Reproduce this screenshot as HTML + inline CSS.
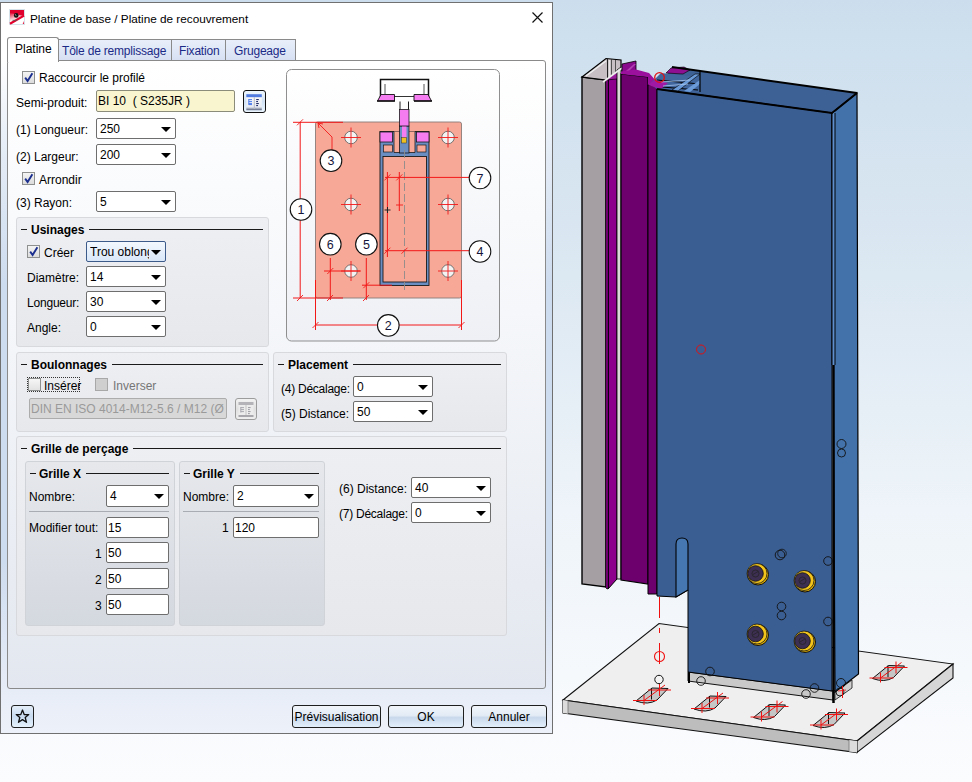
<!DOCTYPE html>
<html><head><meta charset="utf-8">
<style>
*{box-sizing:border-box;margin:0;padding:0}
html,body{width:972px;height:782px;overflow:hidden}
body{position:relative;font-family:"Liberation Sans",sans-serif;font-size:12px;letter-spacing:0px;color:#000;
background:linear-gradient(to bottom,#ccdeed 0%,#dce8f2 35%,#eef4f9 65%,#fbfcfe 100%)}
.a{position:absolute}
.t{position:absolute;white-space:pre;line-height:14px}
#dlg{position:absolute;left:0;top:2px;width:553px;height:732px;border:1px solid #707070;
background:linear-gradient(to bottom,#ffffff 0%,#fafbfd 40%,#eef2f9 100%)}
#panel{position:absolute;left:7px;top:60px;width:539px;height:629px;border:1px solid #8a8a8a;border-radius:3px;
background:linear-gradient(to bottom,#ffffff 0%,#f7f8fa 30%,#eceff4 70%,#e3e7ef 100%)}
.tab{position:absolute;top:39px;height:22px;border:1px solid #8a8a8a;border-bottom:none;background:linear-gradient(#e9effa,#d6e0f3);color:#1e3a8a}
.cb,.tb{position:absolute;background:#fff;border:1px solid #6e6e6e;border-radius:2px}
.cb::after{content:"";position:absolute;right:4px;top:8px;border-left:5px solid transparent;border-right:5px solid transparent;border-top:5px solid #000}
.cb span,.tb span{position:absolute;left:3px;top:3px;white-space:pre;line-height:14px}
.chk{position:absolute;width:13px;height:13px;border:1px solid #8e8f8f;background:linear-gradient(#f4f4f4,#dcdcdc)}
.grp{position:absolute;border:1px solid #d7d9dd;border-radius:3px;background:linear-gradient(#eeeff3,#e6e8ec)}
.gts{font-weight:bold;font-size:12px;letter-spacing:0;position:relative;top:1px;white-space:pre;line-height:14px}
.gt{position:absolute;font-weight:bold;font-size:11.5px;white-space:pre;line-height:14px}
.gl{position:absolute;height:1px;background:#1a1a1a}
.btn{position:absolute;border:1px solid #1f1f1f;border-radius:3px;background:linear-gradient(#f2f6fb 0%,#e3ebf5 45%,#c9d9ec 55%,#e2eefa 100%);text-align:center;line-height:22px}
.tb span{left:1px}
</style></head><body>

<!-- 3D view -->
<svg class="a" style="left:0;top:0" width="972" height="782" viewBox="0 0 972 782">
<polygon points="563,700 659,623.5 953,664 857,741" fill="#efefef" stroke="#111" stroke-width="1.1" />
<polygon points="563,700 857,741 857,752.5 563,713" fill="#bdbdbd" stroke="#111" stroke-width="1.1" />
<polygon points="857,741 953,664 953,678 857,752.5" fill="#d6d6d6" stroke="#111" stroke-width="1.1" />
<polygon points="849,740 857,741 857,752.5 849,751.5" fill="#dcdcdc" stroke="none" stroke-width="1" />
<line x1="849" y1="740" x2="849" y2="751.5" stroke="#777" stroke-width="0.8" />
<polygon points="563,700 568,700.7 568,713.7 563,713" fill="#dcdcdc" stroke="none" stroke-width="1" />
<line x1="568" y1="700.7" x2="568" y2="713.7" stroke="#777" stroke-width="0.8" />
<path d="M636,701 L652,688 L668,688.5 L657,700 Q648,705.5 636,701 Z" fill="#c6c6c6" stroke="#111" stroke-width="1"/>
<path d="M651.5,688 V699.5" stroke="#111" stroke-width="1"/>
<g stroke="#f01010" stroke-width="1" fill="none"><path d="M633,700.5 H657 M644,695 V705"/><path d="M648,690 H671 M659.5,684 V696"/><path d="M644,700.5 L665,685"/></g>
<path d="M694,709 L710,696 L726,696.5 L715,708 Q706,713.5 694,709 Z" fill="#c6c6c6" stroke="#111" stroke-width="1"/>
<path d="M709.5,696 V707.5" stroke="#111" stroke-width="1"/>
<g stroke="#f01010" stroke-width="1" fill="none"><path d="M691,708.5 H715 M702,703 V713"/><path d="M706,698 H729 M717.5,692 V704"/><path d="M702,708.5 L723,693"/></g>
<path d="M753.5,717.5 L769.5,704.5 L785.5,705.0 L774.5,716.5 Q765.5,722.0 753.5,717.5 Z" fill="#c6c6c6" stroke="#111" stroke-width="1"/>
<path d="M769.0,704.5 V716.0" stroke="#111" stroke-width="1"/>
<g stroke="#f01010" stroke-width="1" fill="none"><path d="M750.5,717.0 H774.5 M761.5,711.5 V721.5"/><path d="M765.5,706.5 H788.5 M777.0,700.5 V712.5"/><path d="M761.5,717.0 L782.5,701.5"/></g>
<path d="M813,725.5 L829,712.5 L845,713.0 L834,724.5 Q825,730.0 813,725.5 Z" fill="#c6c6c6" stroke="#111" stroke-width="1"/>
<path d="M828.5,712.5 V724.0" stroke="#111" stroke-width="1"/>
<g stroke="#f01010" stroke-width="1" fill="none"><path d="M810,725.0 H834 M821,719.5 V729.5"/><path d="M825,714.5 H848 M836.5,708.5 V720.5"/><path d="M821,725.0 L842,709.5"/></g>
<path d="M872.5,678.5 L888.5,665.5 L904.5,666.0 L893.5,677.5 Q884.5,683.0 872.5,678.5 Z" fill="#c6c6c6" stroke="#111" stroke-width="1"/>
<path d="M888.0,665.5 V677.0" stroke="#111" stroke-width="1"/>
<g stroke="#f01010" stroke-width="1" fill="none"><path d="M869.5,678.0 H893.5 M880.5,672.5 V682.5"/><path d="M884.5,667.5 H907.5 M896.0,661.5 V673.5"/><path d="M880.5,678.0 L901.5,662.5"/></g>
<polygon points="688,672 833,691 833,700 688,681" fill="#c9c9c9" stroke="#111" stroke-width="1" />
<polygon points="835,692 852,680 852,688 835,700" fill="#d0d0d0" stroke="#111" stroke-width="0.8" />
<line x1="689" y1="672" x2="689" y2="683" stroke="#000" stroke-width="2" />
<line x1="833.5" y1="690" x2="833.5" y2="703" stroke="#000" stroke-width="2.5" />
<polygon points="582,77 606,80 606,587 582,584" fill="#a59ea3" stroke="#000" stroke-width="1.4" />
<polygon points="582,77 606,58.5 621,60 621,76 606,80" fill="#c7bfc4" stroke="#000" stroke-width="1.2" />
<line x1="586" y1="76" x2="606" y2="61" stroke="#f2f2f2" stroke-width="1.2" />
<line x1="607.5" y1="59" x2="607.5" y2="78" stroke="#222" stroke-width="1" />
<line x1="611.5" y1="59" x2="611.5" y2="77" stroke="#333" stroke-width="0.8" />
<line x1="615.5" y1="60" x2="615.5" y2="77" stroke="#333" stroke-width="0.8" />
<line x1="609.5" y1="60" x2="609.5" y2="77" stroke="#e8e4e6" stroke-width="1.2" />
<polygon points="606,80 617,78 617,579 608,589 606,588" fill="#8c008c" stroke="#000" stroke-width="1" />
<polygon points="606,80 608.5,79.5 608.5,588 606,588" fill="#6e006e" stroke="none" stroke-width="1" />
<line x1="608.5" y1="80" x2="608.5" y2="588" stroke="#000" stroke-width="0.9" />
<polygon points="606,80 617,72 621,72 617,79" fill="#9a1a9c" stroke="#000" stroke-width="0.6" />
<polygon points="617,70 621,67 621,579 617,579" fill="#dcd8da" stroke="#000" stroke-width="0.8" />
<line x1="603" y1="82" x2="622" y2="68" stroke="#eeeeee" stroke-width="1.6" />
<polygon points="621,74 648,77 648,584 621,580" fill="#6e006e" stroke="#000" stroke-width="1.2" />
<polygon points="622,64 636,61 636,71 622,74" fill="#8a0a8e" stroke="#000" stroke-width="0.8" />
<polygon points="626,71 634,64 636,64 628,72" fill="#b040b0" stroke="none" stroke-width="1" />
<polygon points="621,71.5 636,69.5 649,73 657,82 657,86 648,85 648,77 621,74" fill="#9c109e" stroke="none" stroke-width="1" />
<polygon points="648,85 657,86 657,594 648,594" fill="#6e006e" stroke="#000" stroke-width="1" />
<polygon points="657,89 672,67 857,93 832,113" fill="#3e6195" stroke="none" stroke-width="1" />
<polygon points="657,89 832,113 832,691 688,672 688,590 676,597 657,596" fill="#3b5e92" stroke="#000" stroke-width="1" />
<polygon points="832,113 857,93 858.5,674 835,692" fill="#4372aa" stroke="#000" stroke-width="1.2" />
<polygon points="832,113 835,111 835,365 832,365" fill="#5e8ecb" stroke="none" stroke-width="1" />
<line x1="833.5" y1="365" x2="833.5" y2="691" stroke="#000" stroke-width="2.4" />
<polygon points="650,84 661,73 700,77 700,92 657,89" fill="#41669e" stroke="none" stroke-width="1" />
<line x1="657" y1="80" x2="700" y2="84" stroke="#000" stroke-width="1.2" />
<line x1="662" y1="87" x2="698" y2="90" stroke="#000" stroke-width="1.2" />
<polygon points="672,90 695,74 700,74 678,91" fill="#6a9ad8" stroke="#000" stroke-width="0.6" />
<polygon points="684,91 700,80 700,84 690,92" fill="#6a9ad8" stroke="none" stroke-width="1" />
<line x1="700" y1="71" x2="700" y2="92" stroke="#000" stroke-width="1.2" />
<polygon points="666,73 671,68 684,67 690,70 683,74" fill="#8e0f92" stroke="#000" stroke-width="0.6" />
<polygon points="648,85 655,80 668,83 661,89" fill="#a018a4" stroke="none" stroke-width="1" />
<line x1="661" y1="82" x2="690" y2="80" stroke="#aac8f0" stroke-width="0.8" />
<line x1="663" y1="86" x2="688" y2="84" stroke="#aac8f0" stroke-width="0.8" />
<polyline points="657,89 832,113 857,93" fill="none" stroke="#000" stroke-width="2"/>
<polyline points="672,67 857,93" fill="none" stroke="#000" stroke-width="2"/>
<line x1="832" y1="113" x2="832" y2="365" stroke="#000" stroke-width="1" />
<line x1="835" y1="113" x2="835" y2="365" stroke="#000" stroke-width="1" />
<path d="M676,597 L676,544 Q676,538 682,538 Q688,538 688,544 L688,590 Z" fill="#4677b0" stroke="#000" stroke-width="1.1"/>
<circle cx="701" cy="349.5" r="4.5" fill="none" stroke="#e01010" stroke-width="1" />
<circle cx="659.5" cy="77.5" r="4.8" fill="none" stroke="#e01010" stroke-width="1.3" />
<line x1="659.5" y1="597" x2="659.5" y2="669" stroke="#f01010" stroke-width="1" stroke-dasharray="21,10,5,10"/>
<circle cx="659.5" cy="656.5" r="5" fill="none" stroke="#f01010" stroke-width="1.1" />
<circle cx="659" cy="679.5" r="4.2" fill="#f4f4f4" stroke="#111" stroke-width="1" />
<circle cx="758" cy="574.5" r="10.5" fill="#e2b000" stroke="#111" stroke-width="1" />
<circle cx="757" cy="573.5" r="10" fill="#f3c51c" stroke="#1a1a1a" stroke-width="0.8" />
<circle cx="755.5" cy="573.5" r="7.8" fill="#3c2f52" stroke="#111" stroke-width="0.8" />
<circle cx="755.5" cy="573.5" r="3.5" fill="none" stroke="#222" stroke-width="0.7" />
<line x1="753" y1="574.5" x2="758" y2="571.5" stroke="#222" stroke-width="0.7" />
<circle cx="805" cy="581.5" r="10.5" fill="#e2b000" stroke="#111" stroke-width="1" />
<circle cx="804" cy="580.5" r="10" fill="#f3c51c" stroke="#1a1a1a" stroke-width="0.8" />
<circle cx="802.5" cy="580.5" r="7.8" fill="#3c2f52" stroke="#111" stroke-width="0.8" />
<circle cx="802.5" cy="580.5" r="3.5" fill="none" stroke="#222" stroke-width="0.7" />
<line x1="800" y1="581.5" x2="805" y2="578.5" stroke="#222" stroke-width="0.7" />
<circle cx="758" cy="635" r="10.5" fill="#e2b000" stroke="#111" stroke-width="1" />
<circle cx="757" cy="634" r="10" fill="#f3c51c" stroke="#1a1a1a" stroke-width="0.8" />
<circle cx="755.5" cy="634" r="7.8" fill="#3c2f52" stroke="#111" stroke-width="0.8" />
<circle cx="755.5" cy="634" r="3.5" fill="none" stroke="#222" stroke-width="0.7" />
<line x1="753" y1="635" x2="758" y2="632" stroke="#222" stroke-width="0.7" />
<circle cx="805" cy="642" r="10.5" fill="#e2b000" stroke="#111" stroke-width="1" />
<circle cx="804" cy="641" r="10" fill="#f3c51c" stroke="#1a1a1a" stroke-width="0.8" />
<circle cx="802.5" cy="641" r="7.8" fill="#3c2f52" stroke="#111" stroke-width="0.8" />
<circle cx="802.5" cy="641" r="3.5" fill="none" stroke="#222" stroke-width="0.7" />
<line x1="800" y1="642" x2="805" y2="639" stroke="#222" stroke-width="0.7" />
<circle cx="782" cy="553.5" r="4.3" fill="none" stroke="#111" stroke-width="0.8" />
<circle cx="780" cy="555" r="4.8" fill="none" stroke="#111" stroke-width="0.9" />
<circle cx="781.5" cy="606.5" r="4.3" fill="none" stroke="#111" stroke-width="0.9" />
<circle cx="781.5" cy="615.5" r="4.3" fill="none" stroke="#111" stroke-width="0.9" />
<circle cx="828" cy="561" r="4.3" fill="none" stroke="#111" stroke-width="0.9" />
<circle cx="828" cy="621.5" r="4.3" fill="none" stroke="#111" stroke-width="0.9" />
<circle cx="841.5" cy="444" r="4.5" fill="none" stroke="#111" stroke-width="0.9" />
<circle cx="841.5" cy="453" r="4" fill="none" stroke="#111" stroke-width="0.9" />
<circle cx="710" cy="671.5" r="4.3" fill="none" stroke="#111" stroke-width="0.9" />
<circle cx="701" cy="681" r="4.3" fill="none" stroke="#111" stroke-width="0.9" />
<circle cx="814.5" cy="688" r="4.3" fill="none" stroke="#111" stroke-width="0.9" />
<circle cx="806" cy="694" r="4.3" fill="none" stroke="#111" stroke-width="0.9" />
<circle cx="841" cy="683" r="4.5" fill="none" stroke="#111" stroke-width="0.9" />
<circle cx="840" cy="692" r="4" fill="none" stroke="#111" stroke-width="0.9" />
<line x1="842.5" y1="686" x2="842.5" y2="698" stroke="#f01010" stroke-width="1" />
<line x1="838" y1="691" x2="846" y2="690" stroke="#f01010" stroke-width="0.8" />
</svg>

<div class="a" style="left:0;top:2px;width:553px;height:732px;border:1px solid #707070;background:linear-gradient(to bottom,#ffffff 0px,#ffffff 55px,#e4ecf6 150px,#cedcef 280px,#cedcef 560px,#e6ecf7 680px,#edf1f9 731px)"></div>
<svg class="a" style="left:9px;top:9px" width="16" height="16" viewBox="0 0 16 16">
<defs><linearGradient id="ig" x1="0" y1="0" x2="0.3" y2="1"><stop offset="0.15" stop-color="#e2002c"/><stop offset="0.75" stop-color="#fff3f0"/></linearGradient></defs>
<rect x="0.5" y="0.5" width="15" height="15" fill="#fff" stroke="#d6e2ea"/>
<path d="M1 1H15V8.5L1 14.5Z" fill="url(#ig)"/>
<path d="M1 1H15V7L1 4Z" fill="#e0002c"/>
<path d="M1 14.8 L15 6.6" stroke="#e2002c" stroke-width="2.2"/>
<path d="M14.3 12 L15 15 H13.8Z" fill="#e2002c"/>
<path d="M3.5 11.3 H8" stroke="#555" stroke-width="0.8"/>
<circle cx="7.2" cy="6.4" r="2.3" fill="#111"/><path d="M6 5.5 L7.4 6.6" stroke="#ddd" stroke-width="0.8"/>
</svg>
<div class="t" style="left:30px;top:12px;font-size:11.75px">Platine de base / Platine de recouvrement</div>
<svg class="a" style="left:531px;top:11px" width="13" height="13" viewBox="0 0 13 13"><path d="M1.5 1.5L11.5 11.5M11.5 1.5L1.5 11.5" stroke="#111" stroke-width="1.2"/></svg>
<div class="tab" style="left:58px;width:115px;"></div>
<div class="t" style="left:62px;top:44px;color:#1b2a86;letter-spacing:-0.2px">Tôle de remplissage</div>
<div class="tab" style="left:171px;width:56px;"></div>
<div class="t" style="left:179px;top:44px;color:#1b2a86;letter-spacing:-0.2px">Fixation</div>
<div class="tab" style="left:225px;width:71px;"></div>
<div class="t" style="left:234px;top:44px;color:#1b2a86;letter-spacing:-0.2px">Grugeage</div>
<div class="a" style="left:7px;top:60px;width:539px;height:629px;border:1px solid #8a8a8a;border-radius:3px;background:linear-gradient(to bottom,#ffffff 0%,#f5f7fa 40%,#e3e7ef 100%)"></div>
<div class="a" style="left:7px;top:37px;width:52px;height:25px;border:1px solid #8a8a8a;border-bottom:none;border-radius:3px 3px 0 0;background:#fff"></div>
<div class="t" style="left:15px;top:42px;">Platine</div>
<div class="chk" style="left:22px;top:71px;"><svg width="11" height="11" style="position:absolute;left:0;top:0"><path d="M2.2 5.6 L4.6 9 L9.4 1.2" fill="none" stroke="#1b2f8f" stroke-width="1.9"/></svg></div>
<div class="t" style="left:39px;top:71px;">Raccourcir le profilé</div>
<div class="t" style="left:16px;top:96px;">Semi-produit:</div>
<div class="tb" style="left:96px;top:90px;width:139px;height:22px;background:#f9f5cf;border-color:#8c8c7a"><span>BI 10  ( S235JR )</span></div>
<div class="a" style="left:243px;top:90px;width:23px;height:23px;border:1px solid #111;border-radius:3px;background:linear-gradient(#eef7fe,#d2e2f4 50%,#eaf5fe)">
<svg width="21" height="21" style="position:absolute;left:0;top:0">
<defs><linearGradient id="bk" x1="0" y1="0" x2="0" y2="1"><stop offset="0" stop-color="#fbfcfe"/><stop offset="0.8" stop-color="#e6eaf2"/><stop offset="1" stop-color="#56607a"/></linearGradient></defs>
<rect x="2.3" y="3.2" width="15.5" height="16" fill="url(#bk)"/>
<rect x="2.3" y="3.2" width="15.5" height="3" fill="#4f7be0"/>
<path d="M10.3 6.2 V18" stroke="#b8bcc6" stroke-width="1"/>
<path d="M4.8 8 V13.8 M4.8 8.6 H8 M4.8 10.6 H8 M4.8 12.6 H8 M4.8 13.6 H8" stroke="#4a7ae8" stroke-width="1"/>
<path d="M12.2 8.6 H14.8 M12.2 10.6 H14 M12.2 12.6 H14.8 M12.2 14.6 H14" stroke="#101c5c" stroke-width="1"/>
</svg></div>
<div class="t" style="left:16px;top:123px;">(1) Longueur:</div>
<div class="cb" style="left:96px;top:118px;width:80px;height:21px;"><span>250</span></div>
<div class="t" style="left:16px;top:150px;">(2) Largeur:</div>
<div class="cb" style="left:96px;top:144px;width:80px;height:21px;"><span>200</span></div>
<div class="chk" style="left:22px;top:172px;"><svg width="11" height="11" style="position:absolute;left:0;top:0"><path d="M2.2 5.6 L4.6 9 L9.4 1.2" fill="none" stroke="#1b2f8f" stroke-width="1.9"/></svg></div>
<div class="t" style="left:39px;top:173px;">Arrondir</div>
<div class="t" style="left:16px;top:196px;">(3) Rayon:</div>
<div class="cb" style="left:96px;top:191px;width:80px;height:21px;"><span>5</span></div>
<div class="grp" style="left:16px;top:217px;width:253px;height:130px;"></div>
<div class="gl" style="left:21px;top:229px;width:6px"></div>
<div class="a" style="left:31px;top:219px;width:232px;height:20px;display:flex;align-items:center"><span class="gts">Usinages</span><span style="flex:1;height:1px;background:#1a1a1a;margin-left:5px;margin-top:1px"></span></div>
<div class="chk" style="left:27px;top:245px;"><svg width="11" height="11" style="position:absolute;left:0;top:0"><path d="M2.2 5.6 L4.6 9 L9.4 1.2" fill="none" stroke="#1b2f8f" stroke-width="1.9"/></svg></div>
<div class="t" style="left:44px;top:246px;">Créer</div>
<div class="cb" style="left:86px;top:241px;width:80px;height:21px;background:linear-gradient(#f3f8fe,#d9e7f8);border-color:#3c5a8a;overflow:hidden"><span><b style="font-weight:normal;display:block;width:59px;overflow:hidden">Trou oblong</b></span></div>
<div class="t" style="left:27px;top:271px;">Diamètre:</div>
<div class="cb" style="left:86px;top:266px;width:80px;height:21px;"><span>14</span></div>
<div class="t" style="left:27px;top:296px;letter-spacing:-0.2px">Longueur:</div>
<div class="cb" style="left:86px;top:291px;width:80px;height:21px;"><span>30</span></div>
<div class="t" style="left:27px;top:321px;">Angle:</div>
<div class="cb" style="left:86px;top:316px;width:80px;height:21px;"><span>0</span></div>
<div class="grp" style="left:16px;top:352px;width:253px;height:80px;"></div>
<div class="gl" style="left:21px;top:364px;width:6px"></div>
<div class="a" style="left:31px;top:354px;width:232px;height:20px;display:flex;align-items:center"><span class="gts">Boulonnages</span><span style="flex:1;height:1px;background:#1a1a1a;margin-left:5px;margin-top:1px"></span></div>
<div class="chk" style="left:28px;top:378px;background:linear-gradient(#f6f6f6,#e2e2e2)"></div>
<div class="a" style="left:27px;top:377px;width:53px;height:15px;border:1px dotted #333"></div>
<div class="t" style="left:44px;top:379px;">Insérer</div>
<div class="chk" style="left:95px;top:378px;background:#cfcfcf;border-color:#a8a8a8"></div>
<div class="t" style="left:113px;top:379px;color:#767676">Inverser</div>
<div class="tb" style="left:29px;top:398px;width:198px;height:21px;background:#d8d8d8;border-color:#acacac;color:#9a9a9a;overflow:hidden"><span>DIN EN ISO 4014-M12-5.6 / M12 (Ø</span></div>
<div class="a" style="left:235px;top:398px;width:22px;height:22px;border:1px solid #9c9c9c;border-radius:3px;background:linear-gradient(#f2f2f2,#e0e0e0 50%,#eeeeee)">
<svg width="20" height="20" style="position:absolute;left:0;top:0">
<rect x="2.5" y="3" width="15" height="15" fill="#ececec"/>
<rect x="2.5" y="3" width="15" height="3" fill="#b4b4b8"/>
<rect x="2.5" y="16" width="15" height="2" fill="#a8a8ac"/>
<path d="M10 6 V16" stroke="#c4c4c4" stroke-width="1"/>
<path d="M4.8 8 V13.5 M4.8 8.6 H8 M4.8 10.6 H8 M4.8 12.6 H8" stroke="#a8a8b0" stroke-width="1"/>
<path d="M12 8.6 H14.6 M12 10.6 H13.8 M12 12.6 H14.6 M12 14.6 H13.8" stroke="#9a9aa0" stroke-width="1"/>
</svg></div>
<div class="grp" style="left:273px;top:352px;width:234px;height:80px;"></div>
<div class="gl" style="left:278px;top:364px;width:6px"></div>
<div class="a" style="left:288px;top:354px;width:213px;height:20px;display:flex;align-items:center"><span class="gts">Placement</span><span style="flex:1;height:1px;background:#1a1a1a;margin-left:5px;margin-top:1px"></span></div>
<div class="t" style="left:281px;top:382px;letter-spacing:-0.25px">(4) Décalage:</div>
<div class="cb" style="left:353px;top:376px;width:80px;height:21px;"><span>0</span></div>
<div class="t" style="left:281px;top:407px;">(5) Distance:</div>
<div class="cb" style="left:353px;top:401px;width:80px;height:21px;"><span>50</span></div>
<div class="grp" style="left:16px;top:436px;width:491px;height:200px;"></div>
<div class="gl" style="left:21px;top:448px;width:6px"></div>
<div class="a" style="left:31px;top:438px;width:470px;height:20px;display:flex;align-items:center"><span class="gts">Grille de perçage</span><span style="flex:1;height:1px;background:#1a1a1a;margin-left:5px;margin-top:1px"></span></div>
<div class="grp" style="left:25px;top:461px;width:150px;height:165px;background:linear-gradient(#e6e8ec,#d4d8df);border-color:#d0d3d8"></div>
<div class="gl" style="left:30px;top:473px;width:6px"></div>
<div class="a" style="left:39px;top:463px;width:130px;height:20px;display:flex;align-items:center"><span class="gts">Grille X</span><span style="flex:1;height:1px;background:#1a1a1a;margin-left:5px;margin-top:1px"></span></div>
<div class="t" style="left:29px;top:490px;">Nombre:</div>
<div class="cb" style="left:106px;top:485px;width:63px;height:22px;"><span>4</span></div>
<div class="a" style="left:29px;top:511px;width:140px;height:1px;background:#a9acb2"></div>
<div class="t" style="left:29px;top:521px;">Modifier tout:</div>
<div class="tb" style="left:106px;top:517px;width:63px;height:21px;"><span>15</span></div>
<div class="t" style="left:95px;top:547px;">1</div>
<div class="tb" style="left:106px;top:542px;width:63px;height:21px;"><span>50</span></div>
<div class="t" style="left:95px;top:573px;">2</div>
<div class="tb" style="left:106px;top:568px;width:63px;height:21px;"><span>50</span></div>
<div class="t" style="left:95px;top:599px;">3</div>
<div class="tb" style="left:106px;top:594px;width:63px;height:21px;"><span>50</span></div>
<div class="grp" style="left:179px;top:461px;width:146px;height:165px;background:linear-gradient(#e6e8ec,#d4d8df);border-color:#d0d3d8"></div>
<div class="gl" style="left:184px;top:473px;width:6px"></div>
<div class="a" style="left:193px;top:463px;width:126px;height:20px;display:flex;align-items:center"><span class="gts">Grille Y</span><span style="flex:1;height:1px;background:#1a1a1a;margin-left:5px;margin-top:1px"></span></div>
<div class="t" style="left:183px;top:490px;">Nombre:</div>
<div class="cb" style="left:233px;top:485px;width:86px;height:22px;"><span>2</span></div>
<div class="a" style="left:183px;top:511px;width:136px;height:1px;background:#a9acb2"></div>
<div class="t" style="left:222px;top:521px;">1</div>
<div class="tb" style="left:233px;top:517px;width:86px;height:21px;"><span>120</span></div>
<div class="t" style="left:339px;top:482px;">(6) Distance:</div>
<div class="cb" style="left:411px;top:477px;width:80px;height:21px;"><span>40</span></div>
<div class="t" style="left:339px;top:507px;letter-spacing:-0.25px">(7) Décalage:</div>
<div class="cb" style="left:411px;top:502px;width:80px;height:21px;"><span>0</span></div>
<div class="btn" style="left:11px;top:705px;width:23px;height:23px;border-radius:3px;background:linear-gradient(#e4edf8,#c8dbf0 50%,#e6f2fc)">
<svg width="21" height="21" style="position:absolute;left:0;top:0"><path d="M10.5 4 L12.2 8.5 L16.8 8.6 L13.2 11.5 L14.5 16.3 L10.5 13.6 L6.5 16.3 L7.8 11.5 L4.2 8.6 L8.8 8.5 Z" fill="none" stroke="#111" stroke-width="1.3" stroke-linejoin="round"/></svg></div>
<div class="btn" style="left:292px;top:705px;width:89px;height:23px">Prévisualisation</div>
<div class="btn" style="left:388px;top:705px;width:76px;height:23px">OK</div>
<div class="btn" style="left:471px;top:705px;width:76px;height:23px">Annuler</div>
<svg class="a" style="left:0;top:0" width="972" height="782" viewBox="0 0 972 782">
<defs><linearGradient id="pg" x1="0" y1="0" x2="0" y2="1"><stop offset="0" stop-color="#ffffff"/><stop offset="1" stop-color="#eef0f5"/></linearGradient></defs>
<rect x="286.5" y="69.5" width="213" height="271.5" rx="5" fill="url(#pg)" stroke="#8f8f8f" stroke-width="1"/>
<rect x="315.5" y="122" width="146" height="176" rx="2" fill="#f8a897" stroke="#8a7a78" stroke-width="0.9"/>
<circle cx="351" cy="137.5" r="6.3" fill="#f3f3f3" stroke="#666" stroke-width="0.9"/>
<line x1="341" y1="137.5" x2="361" y2="137.5" stroke="#f21818" stroke-width="0.9" />
<line x1="351" y1="127.5" x2="351" y2="147.5" stroke="#f21818" stroke-width="0.9" />
<circle cx="351" cy="204.5" r="6.3" fill="#f3f3f3" stroke="#666" stroke-width="0.9"/>
<line x1="341" y1="204.5" x2="361" y2="204.5" stroke="#f21818" stroke-width="0.9" />
<line x1="351" y1="194.5" x2="351" y2="214.5" stroke="#f21818" stroke-width="0.9" />
<circle cx="351" cy="271" r="6.3" fill="#f3f3f3" stroke="#666" stroke-width="0.9"/>
<line x1="341" y1="271" x2="361" y2="271" stroke="#f21818" stroke-width="0.9" />
<line x1="351" y1="261" x2="351" y2="281" stroke="#f21818" stroke-width="0.9" />
<circle cx="448" cy="137.5" r="6.3" fill="#f3f3f3" stroke="#666" stroke-width="0.9"/>
<line x1="438" y1="137.5" x2="458" y2="137.5" stroke="#f21818" stroke-width="0.9" />
<line x1="448" y1="127.5" x2="448" y2="147.5" stroke="#f21818" stroke-width="0.9" />
<circle cx="448" cy="204.5" r="6.3" fill="#f3f3f3" stroke="#666" stroke-width="0.9"/>
<line x1="438" y1="204.5" x2="458" y2="204.5" stroke="#f21818" stroke-width="0.9" />
<line x1="448" y1="194.5" x2="448" y2="214.5" stroke="#f21818" stroke-width="0.9" />
<circle cx="448" cy="271" r="6.3" fill="#f3f3f3" stroke="#666" stroke-width="0.9"/>
<line x1="438" y1="271" x2="458" y2="271" stroke="#f21818" stroke-width="0.9" />
<line x1="448" y1="261" x2="448" y2="281" stroke="#f21818" stroke-width="0.9" />
<rect x="380" y="131.5" width="49" height="154" fill="#6a8dc2" stroke="#1a1a1a" stroke-width="0.9"/>
<rect x="383" y="156.5" width="43.5" height="125.5" fill="#f8a897" stroke="#1a1a1a" stroke-width="0.9"/>
<rect x="383.5" y="145" width="9" height="7" fill="#f8a897" stroke="#1a1a1a" stroke-width="0.7"/>
<rect x="417" y="145" width="9" height="7" fill="#f8a897" stroke="#1a1a1a" stroke-width="0.7"/>
<path d="M394 131.5 V152.5 H415 V131.5" fill="#f8a897" stroke="#1a1a1a" stroke-width="0.8"/>
<rect x="399.5" y="126" width="9.5" height="27" fill="#6a8dc2" stroke="#1a1a1a" stroke-width="0.8"/>
<rect x="380" y="132" width="12.5" height="10" fill="#f47cf0" stroke="#1a1a1a" stroke-width="0.8"/>
<rect x="416.5" y="132" width="12.5" height="10" fill="#f47cf0" stroke="#1a1a1a" stroke-width="0.8"/>
<rect x="402" y="126" width="4.5" height="12" fill="#f47cf0"/>
<rect x="401.5" y="137.5" width="5" height="5.5" fill="#f0c020" stroke="#333" stroke-width="0.5"/>
<rect x="399.5" y="109.5" width="9.5" height="16.5" fill="#f47cf0" stroke="#1a1a1a" stroke-width="0.8"/>
<path d="M400 101.5 V109.5 M408.5 101.5 V109.5" stroke="#1a1a1a" stroke-width="1"/>
<path d="M380.5 98.5 V79.5 H428.5 V98.5" fill="#fff" stroke="#111" stroke-width="1.5"/>
<path d="M394 96.5 H414.5" stroke="#333" stroke-width="1"/>
<path d="M377.5 101 L381 94.5 H394.5 V101 Z" fill="#f47cf0" stroke="#111" stroke-width="0.9"/>
<path d="M431.5 101 L428 94.5 H414 V101 Z" fill="#f47cf0" stroke="#111" stroke-width="0.9"/>
<path d="M385 84 V94 M424 84 V94" stroke="#555" stroke-width="1"/>
<path d="M377 101 H395 M414 101 H432" stroke="#111" stroke-width="1.6"/>
<line x1="404.5" y1="150" x2="404.5" y2="290" stroke="#8c8c8c" stroke-width="0.9" stroke-dasharray="8,3"/>
<line x1="293" y1="122.3" x2="343" y2="122.3" stroke="#f21818" stroke-width="1" />
<line x1="297" y1="125.3" x2="303" y2="119.3" stroke="#f21818" stroke-width="0.9" />
<line x1="300.2" y1="122" x2="300.2" y2="298" stroke="#f21818" stroke-width="1" />
<line x1="293" y1="298" x2="343" y2="298" stroke="#f21818" stroke-width="1" />
<line x1="297" y1="301" x2="303" y2="295" stroke="#f21818" stroke-width="0.9" />
<line x1="327" y1="301" x2="333" y2="295" stroke="#f21818" stroke-width="0.9" />
<line x1="363" y1="301" x2="369" y2="295" stroke="#f21818" stroke-width="0.9" />
<line x1="315.5" y1="280" x2="315.5" y2="330" stroke="#f21818" stroke-width="1" />
<line x1="461.5" y1="280" x2="461.5" y2="330" stroke="#f21818" stroke-width="1" />
<line x1="315.5" y1="325" x2="461.5" y2="325" stroke="#f21818" stroke-width="1" />
<line x1="312.5" y1="328" x2="318.5" y2="322" stroke="#f21818" stroke-width="0.9" />
<line x1="458.5" y1="328" x2="464.5" y2="322" stroke="#f21818" stroke-width="0.9" />
<line x1="330.3" y1="258" x2="330.3" y2="300" stroke="#f21818" stroke-width="1" />
<line x1="324" y1="271" x2="360" y2="271" stroke="#f21818" stroke-width="1" />
<line x1="327.3" y1="274" x2="333.3" y2="268" stroke="#f21818" stroke-width="0.9" />
<line x1="366.3" y1="258" x2="366.3" y2="300" stroke="#f21818" stroke-width="1" />
<line x1="362" y1="285.2" x2="392" y2="285.2" stroke="#f21818" stroke-width="1" />
<line x1="363.3" y1="288.2" x2="369.3" y2="282.2" stroke="#f21818" stroke-width="0.9" />
<line x1="387.4" y1="172" x2="387.4" y2="257" stroke="#f21818" stroke-width="1" />
<line x1="385" y1="250.7" x2="469" y2="250.7" stroke="#f21818" stroke-width="1" />
<line x1="384.4" y1="253.7" x2="390.4" y2="247.7" stroke="#f21818" stroke-width="0.9" />
<line x1="401.5" y1="253.7" x2="407.5" y2="247.7" stroke="#f21818" stroke-width="0.9" />
<line x1="399.3" y1="172" x2="399.3" y2="211" stroke="#f21818" stroke-width="1" />
<line x1="385" y1="177.4" x2="469" y2="177.4" stroke="#f21818" stroke-width="1" />
<line x1="384.4" y1="180.4" x2="390.4" y2="174.4" stroke="#f21818" stroke-width="0.9" />
<line x1="396.3" y1="180.4" x2="402.3" y2="174.4" stroke="#f21818" stroke-width="0.9" />
<line x1="396" y1="205" x2="403" y2="205" stroke="#f21818" stroke-width="0.9" />
<path d="M384.5 210 H390.5 M387.5 207 V213" stroke="#222" stroke-width="1"/>
<path d="M318 123 L332 137 V150" fill="none" stroke="#f21818" stroke-width="0.9"/>
<path d="M318 123 l1 5 M318 123 l5 1" fill="none" stroke="#f21818" stroke-width="0.9"/>
<circle cx="331" cy="160.7" r="10.8" fill="#fff" stroke="#111" stroke-width="1.1"/>
<text x="331" y="165.29999999999998" text-anchor="middle" font-family="Liberation Sans" font-size="12.5" fill="#15153a">3</text>
<circle cx="301" cy="209.5" r="10.8" fill="#fff" stroke="#111" stroke-width="1.1"/>
<text x="301" y="214.1" text-anchor="middle" font-family="Liberation Sans" font-size="12.5" fill="#15153a">1</text>
<circle cx="330.3" cy="244.2" r="10.8" fill="#fff" stroke="#111" stroke-width="1.1"/>
<text x="330.3" y="248.79999999999998" text-anchor="middle" font-family="Liberation Sans" font-size="12.5" fill="#15153a">6</text>
<circle cx="366.4" cy="244.2" r="10.8" fill="#fff" stroke="#111" stroke-width="1.1"/>
<text x="366.4" y="248.79999999999998" text-anchor="middle" font-family="Liberation Sans" font-size="12.5" fill="#15153a">5</text>
<circle cx="480" cy="178" r="10.8" fill="#fff" stroke="#111" stroke-width="1.1"/>
<text x="480" y="182.6" text-anchor="middle" font-family="Liberation Sans" font-size="12.5" fill="#15153a">7</text>
<circle cx="480" cy="251.5" r="10.8" fill="#fff" stroke="#111" stroke-width="1.1"/>
<text x="480" y="256.1" text-anchor="middle" font-family="Liberation Sans" font-size="12.5" fill="#15153a">4</text>
<circle cx="388.3" cy="325.4" r="10.8" fill="#fff" stroke="#111" stroke-width="1.1"/>
<text x="388.3" y="330.0" text-anchor="middle" font-family="Liberation Sans" font-size="12.5" fill="#15153a">2</text>
</svg>

</body></html>
